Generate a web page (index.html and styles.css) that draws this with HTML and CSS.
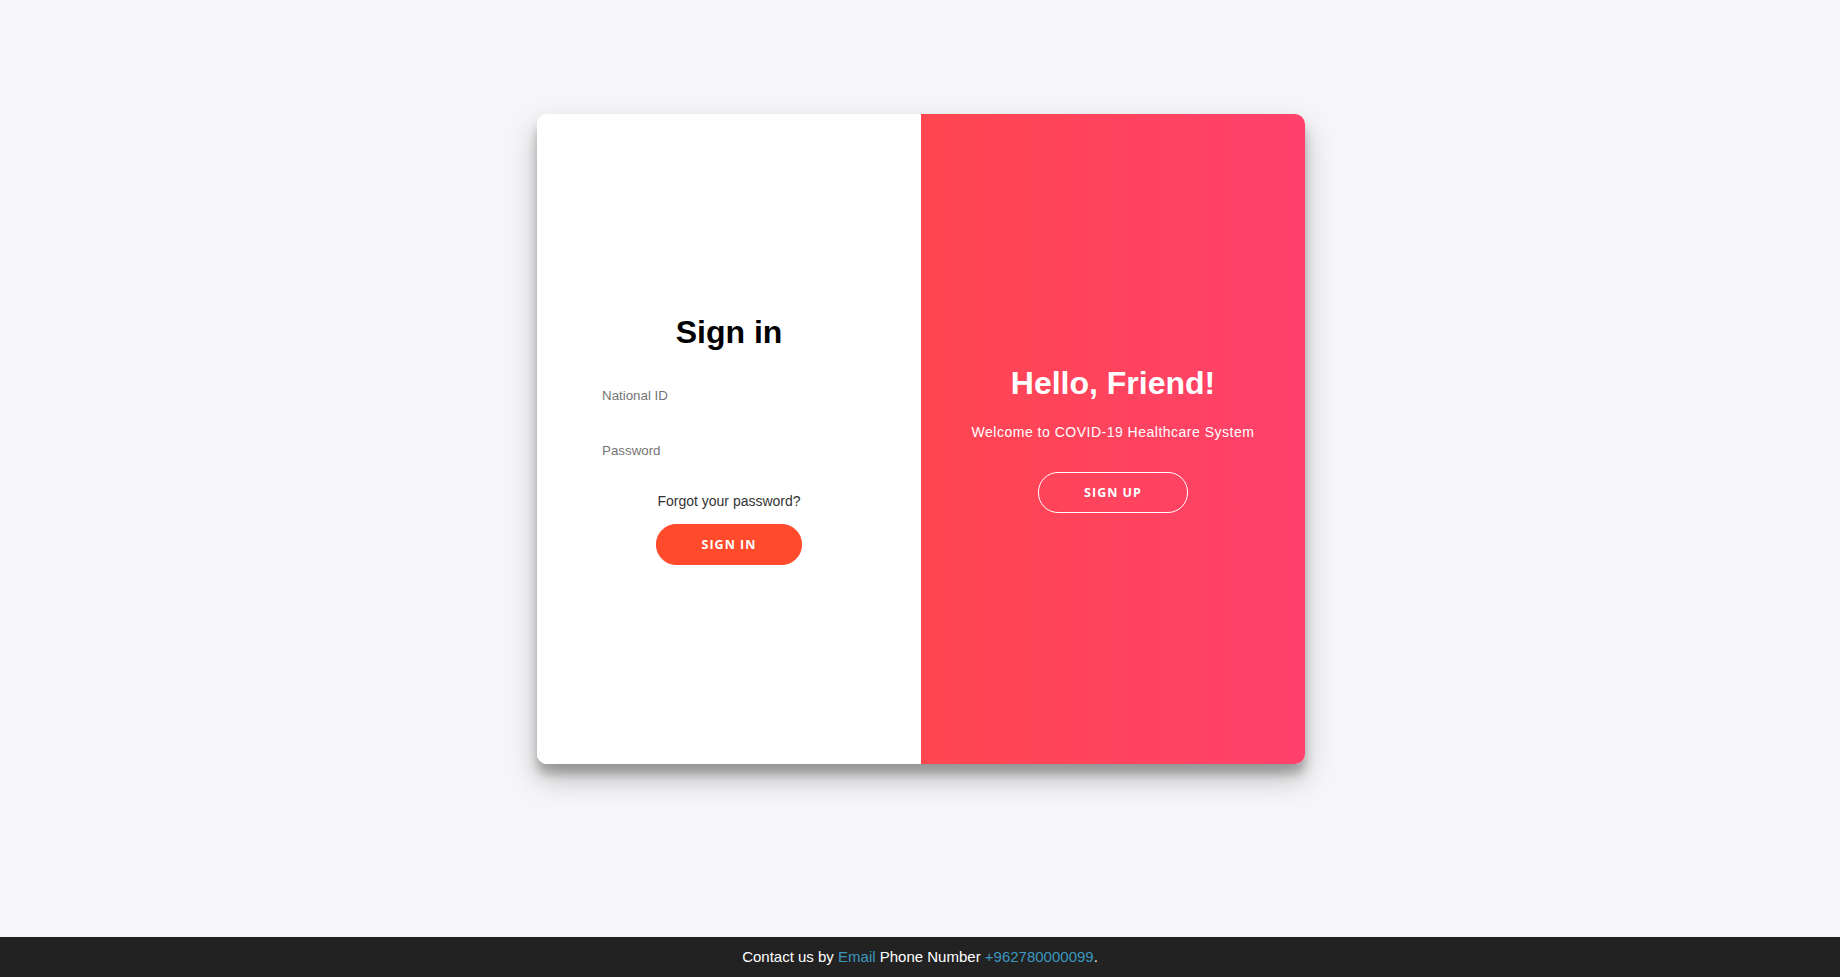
FILE: index.html
```html
<!DOCTYPE html>
<html lang="en">
<head>
<meta charset="utf-8">
<title>Sign in</title>
<link rel="stylesheet" href="styles.css">
</head>
<body>
<main class="page">
  <div class="card">
    <form class="form">
      <h1 class="title">Sign in</h1>
      <input class="field" type="text" placeholder="National ID">
      <input class="field" type="password" placeholder="Password">
      <a class="forgot" href="#">Forgot your password?</a>
      <button class="btn" type="button">Sign In</button>
    </form>
    <div class="overlay">
      <h1 class="title light">Hello, Friend!</h1>
      <p class="welcome">Welcome to COVID-19 Healthcare System</p>
      <button class="btn ghost" type="button">Sign Up</button>
    </div>
  </div>
</main>
<footer class="footer">
  <p class="footer-text">Contact us by <a class="footer-link" href="#">Email</a> Phone Number <a class="footer-link" href="#">+962780000099</a>.</p>
</footer>
</body>
</html>
```

FILE: styles.css
```css
* { box-sizing: border-box; }

html, body {
  margin: 0;
  padding: 0;
  height: 100%;
}

body {
  background: #f6f5f7;
  font-family: "Liberation Sans", Arial, sans-serif;
  display: flex;
  flex-direction: column;
}

.page {
  flex: 1;
  display: flex;
  justify-content: center;
  align-items: flex-start;
  padding-top: 114px;
}

.card {
  width: 768px;
  height: 650px;
  margin-left: 2px;
  background: #fff;
  border-radius: 10px;
  box-shadow: 0 14px 28px rgba(0,0,0,0.25), 0 10px 10px rgba(0,0,0,0.22);
  display: flex;
  overflow: hidden;
}

.form {
  width: 384px;
  height: 100%;
  padding: 0 50px;
  display: flex;
  flex-direction: column;
  align-items: center;
  justify-content: center;
  background: #fff;
  text-align: center;
}

.title {
  margin: 0 0 17px;
  font-size: 32px;
  font-weight: bold;
  line-height: 37px;
  color: #000;
}

.title.light {
  color: #fff;
  margin: 0;
}

.field {
  display: block;
  width: 100%;
  margin: 8px 0;
  padding: 12px 15px;
  border: none;
  outline: none;
  background: transparent;
  font-family: "Liberation Sans", Arial, sans-serif;
  font-size: 13.333px;
  line-height: 15px;
  color: #333;
}

.field::placeholder {
  color: #757575;
}

.forgot {
  margin: 15px 0;
  font-size: 14px;
  line-height: 16px;
  color: #333;
  text-decoration: none;
}

.btn {
  border-radius: 20px;
  border: 1px solid #ff4b2b;
  background: #ff4b2b;
  color: #fff;
  font-family: "Open Sans", sans-serif;
  font-size: 12.5px;
  font-weight: bold;
  line-height: 15px;
  padding: 12px 45px;
  letter-spacing: 1px;
  text-transform: uppercase;
  cursor: pointer;
}

.btn.ghost {
  background: transparent;
  border-color: #fff;
}

.overlay {
  width: 384px;
  height: 100%;
  padding: 0 40px;
  display: flex;
  flex-direction: column;
  align-items: center;
  justify-content: center;
  text-align: center;
  color: #fff;
  background: linear-gradient(to right, #ff4650, #ff416c);
}

.welcome {
  margin: 20px 0 30px;
  font-size: 14px;
  line-height: 20px;
  letter-spacing: 0.5px;
  font-weight: 300;
}

.footer {
  background: #222;
  color: #fff;
  font-size: 15px;
  text-align: center;
}

.footer-text {
  margin: 10px 0;
  line-height: 20px;
}

.footer-link {
  color: #3c97bf;
  text-decoration: none;
}
```
